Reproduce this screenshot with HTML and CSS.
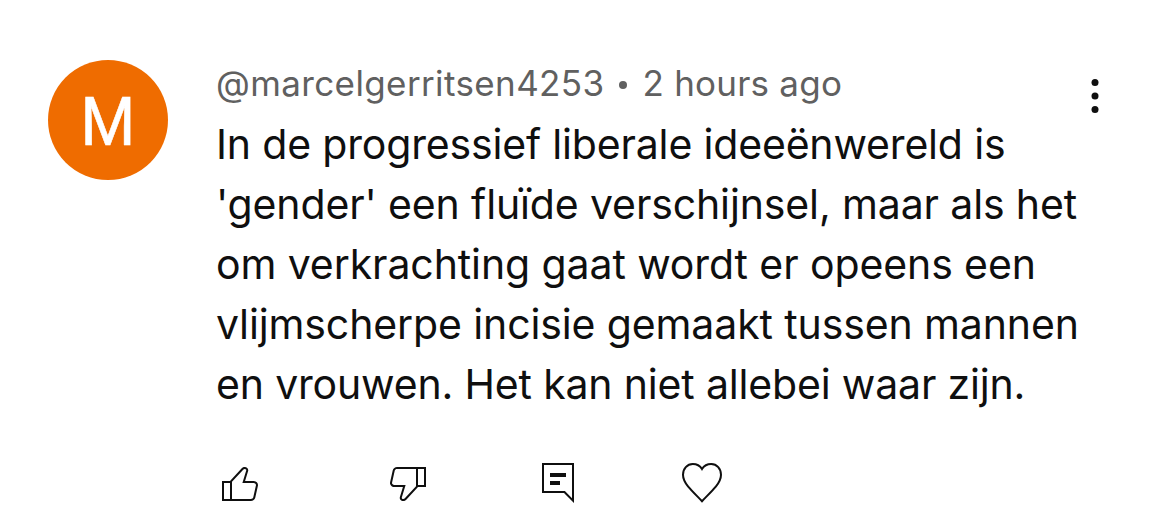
FILE: index.html
```html
<!DOCTYPE html>
<html lang="nl">
<head>
  <meta charset="UTF-8" />
  <meta name="viewport" content="width=device-width, initial-scale=1.0"/>
  <title>Comment</title>
  <link rel="stylesheet" href="styles.css">
</head>
<body>
  <div class="comment">
    <div class="avatar"><span class="initial">M</span></div>

    <div class="content">
      <div class="meta">
        <span class="author">@marcelgerritsen4253</span>
        <span class="dot"></span>
        <span class="time">2 hours ago</span>
      </div>

      <p class="text">
        <span class="line line-1">In de progressief liberale ideeënwereld is</span>
        <span class="line line-2">'gender' een fluïde verschijnsel, maar als het</span>
        <span class="line line-3">om verkrachting gaat wordt er opeens een</span>
        <span class="line line-4">vlijmscherpe incisie gemaakt tussen mannen</span>
        <span class="line line-5">en vrouwen. Het kan niet allebei waar zijn.</span>
      </p>

      <div class="actions">
        <svg class="icon icon-like" viewBox="0 0 24 24">
          <path d="M18.77,11h-4.23l1.52-4.94C16.38,5.03,15.54,4,14.38,4c-0.58,0-1.14,0.24-1.52,0.65L7,11H3v10h4h1h9.43c1.06,0,1.98-0.67,2.19-1.61l1.34-6C21.23,12.15,20.18,11,18.77,11z M7,20H4v-8h3V20z M19.98,13.17l-1.34,6C18.54,19.65,18.03,20,17.43,20H8v-8.61l5.6-6.06C13.79,5.12,14.08,5,14.38,5c0.26,0,0.5,0.11,0.63,0.3c0.07,0.1,0.15,0.26,0.09,0.47l-1.52,4.94L13.18,12h1.35h4.23c0.41,0,0.8,0.17,1.03,0.46C19.92,12.61,20.05,12.86,19.98,13.17z"/>
        </svg>
        <svg class="icon icon-dislike" viewBox="0 0 24 24">
          <path transform="rotate(180 12 12)" d="M18.77,11h-4.23l1.52-4.94C16.38,5.03,15.54,4,14.38,4c-0.58,0-1.14,0.24-1.52,0.65L7,11H3v10h4h1h9.43c1.06,0,1.98-0.67,2.19-1.61l1.34-6C21.23,12.15,20.18,11,18.77,11z M7,20H4v-8h3V20z M19.98,13.17l-1.34,6C18.54,19.65,18.03,20,17.43,20H8v-8.61l5.6-6.06C13.79,5.12,14.08,5,14.38,5c0.26,0,0.5,0.11,0.63,0.3c0.07,0.1,0.15,0.26,0.09,0.47l-1.52,4.94L13.18,12h1.35h4.23c0.41,0,0.8,0.17,1.03,0.46C19.92,12.61,20.05,12.86,19.98,13.17z"/>
        </svg>
        <svg class="icon icon-reply" viewBox="0 0 24 24">
          <path d="M8,7h8v2H8V7z M8,13h5v-2H8V13z M5,3v13h10h0.41l0.29,0.29L19,19.59V3H5 M4,2h16v20l-5-5H4V2z"/>
        </svg>
        <svg class="icon icon-heart" viewBox="0 0 24 24">
          <path d="M12,21.1C9.2,18.2 6.8,15.9 5,13.7C3.3,11.6 2.5,10 2.5,7.9C2.5,4.9 4.6,2.5 7.4,2.5C9.3,2.5 11,3.4 12,5C13,3.4 14.7,2.5 16.6,2.5C19.4,2.5 21.5,4.9 21.5,7.9C21.5,10 20.7,11.6 19,13.7C17.2,15.9 14.8,18.2 12,21.1Z"/>
        </svg>
      </div>
    </div>

    <svg class="menu" viewBox="0 0 8 36">
      <circle cx="4" cy="4.5" r="3.5"/>
      <circle cx="4" cy="18" r="3.5"/>
      <circle cx="4" cy="31.5" r="3.5"/>
    </svg>
  </div>
</body>
</html>
```
FILE: styles.css
```css
body {
  font-family: Inter, sans-serif;
  background-color: #fff;
  color: #0f0f0f;
  margin: 0;
}

.comment {
  display: flex;
  align-items: flex-start;
  padding: 60px 71px 0 48px;
}

.avatar {
  width: 120px;
  height: 120px;
  line-height: 125px;
  border-radius: 50%;
  background-color: #ef6c00;
  color: #fff;
  font-family: Roboto, sans-serif;
  font-size: 66px;
  text-align: center;
}

.initial {
  display: inline-block;
  transform: scaleX(0.95);
  -webkit-text-stroke: 0.6px #fff;
}

.content {
  flex: 1;
  margin-left: 48px;
}

.meta {
  display: flex;
  align-items: center;
  height: 46px;
  color: #606060;
  font-size: 35px;
  white-space: nowrap;
}

.author {
  letter-spacing: 0.38px;
}

.time {
  letter-spacing: 0.22px;
}

.dot {
  width: 8px;
  height: 8px;
  margin: 4px 16px 0 14px;
  border-radius: 50%;
  background-color: #606060;
}

.text {
  margin: 8px 0 0;
  font-size: 41px;
  line-height: 60px;
}

.line {
  display: block;
  white-space: nowrap;
}

.line-1 {
  letter-spacing: -0.17px;
}

.line-2 {
  letter-spacing: -0.13px;
}

.line-3 {
  letter-spacing: -0.1px;
}

.line-4 {
  letter-spacing: -0.12px;
}

.line-5 {
  letter-spacing: -0.17px;
}

.actions {
  display: flex;
  margin-top: 45px;
}

.icon {
  width: 48px;
  height: 48px;
  fill: #0f0f0f;
}

.icon-dislike {
  margin: 2px 0 0 120px;
}

.icon-reply {
  margin-left: 102px;
}

.icon-heart {
  margin-left: 96px;
  fill: none;
  stroke: #0f0f0f;
}

.menu {
  width: 8px;
  height: 36px;
  margin-top: 18px;
  fill: #0f0f0f;
}
```
